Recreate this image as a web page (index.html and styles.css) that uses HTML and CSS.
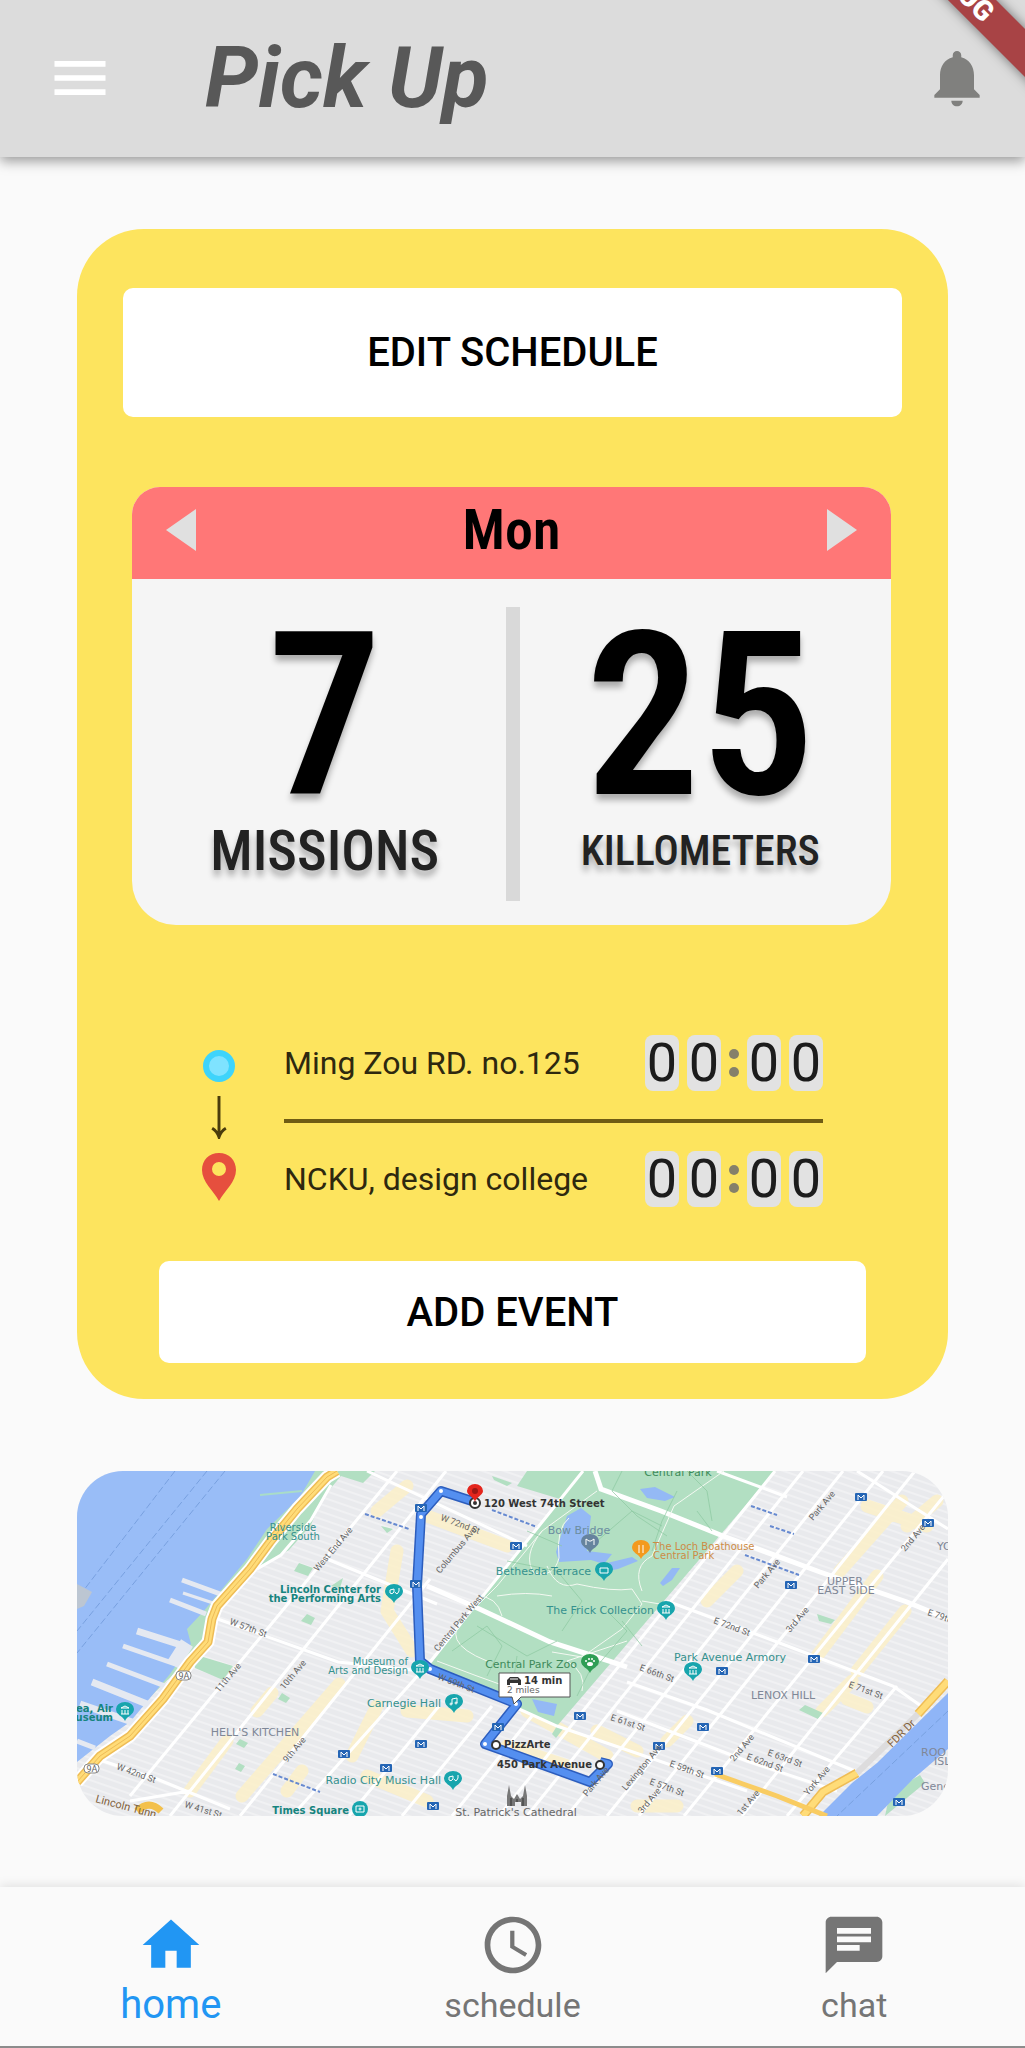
FILE: index.html
```html
<!DOCTYPE html>
<html lang="en">
<head>
<meta charset="utf-8">
<meta name="viewport" content="width=device-width, initial-scale=1">
<title>Pick Up</title>
<link rel="stylesheet" href="styles.css">
</head>
<body>
<header class="app-bar">
  <button class="icon-button" type="button" aria-label="Menu">
    <svg class="icon" viewBox="0 0 24 24"><path fill="#fff" d="M3 18h18v-2H3v2zm0-5h18v-2H3v2zm0-7v2h18V6H3z"/></svg>
  </button>
  <h1 class="app-title">Pick Up</h1>
  <button class="icon-button" type="button" aria-label="Notifications">
    <svg class="icon" viewBox="0 0 24 24"><path fill="#80807e" d="M12 22c1.100 0 2-.9 2-2h-4c0 1.100.89 2 2 2zm6-6v-5c0-3.070-1.640-5.640-4.500-6.320V4c0-.83-.67-1.500-1.500-1.500s-1.500.67-1.500 1.500v.68C7.630 5.360 6 7.920 6 11v5l-2 2v1h16v-1l-2-2z"/></svg>
  </button>
  <div class="ribbon-box"><span class="ribbon">DEBUG</span></div>
</header>

<main class="content">
  <section class="planner">
    <button class="action edit" type="button">EDIT SCHEDULE</button>

    <article class="day">
      <div class="day-head">
        <button class="arrow" type="button" aria-label="Previous day"><svg class="arrow-icon" viewBox="0 0 30 42"><path fill="#e0e0e0" d="M30 0v42L0 21z"/></svg></button>
        <h2 class="day-name">Mon</h2>
        <button class="arrow" type="button" aria-label="Next day"><svg class="arrow-icon" viewBox="0 0 30 42"><path fill="#e0e0e0" d="M0 0v42l30-21z"/></svg></button>
      </div>
      <div class="stats">
        <div class="stat"><span class="number">7</span><span class="unit">MISSIONS</span></div>
        <div class="rule"></div>
        <div class="stat"><span class="number">25</span><span class="unit small">KILLOMETERS</span></div>
      </div>
    </article>

    <div class="route">
      <div class="track">
        <svg class="dot" viewBox="0 0 32 32"><circle cx="16" cy="16" r="13" fill="#7fe3ff" stroke="#3ed4fb" stroke-width="6"/></svg>
        <svg class="down" viewBox="0 0 20 44"><path d="M10 0v41M3 33q5 3 7 9 2-6 7-9" fill="none" stroke="#4a3c0c" stroke-width="3"/></svg>
        <svg class="pin" viewBox="0 0 34 48"><path fill="#e64f3e" fill-rule="evenodd" d="M17 0C7 0 0 7 0 17c0 12 11 20 17 31 6-11 17-19 17-31C34 7 27 0 17 0zm0 9a7 7 0 1 1 0 14 7 7 0 0 1 0-14z"/></svg>
      </div>
      <div class="stops">
        <div class="stop"><span class="place">Ming Zou RD. no.125</span><span class="time"><b class="digit">0</b><b class="digit">0</b><i class="colon"></i><b class="digit">0</b><b class="digit">0</b></span></div>
        <hr class="line">
        <div class="stop"><span class="place">NCKU, design college</span><span class="time"><b class="digit">0</b><b class="digit">0</b><i class="colon"></i><b class="digit">0</b><b class="digit">0</b></span></div>
      </div>
    </div>

    <button class="action add" type="button">ADD EVENT</button>
  </section>

  <svg class="map" viewBox="0 0 871 345" role="img" aria-label="Route map">
    <defs>
      <pattern id="streets" width="60" height="7" patternUnits="userSpaceOnUse" patternTransform="rotate(19)"><path d="M0 1h60" stroke="#f8f8f9" stroke-width="1"/></pattern>
      <g id="metro"><rect x="-6" y="-4" width="12" height="8" rx="1" fill="#2465b5"/><path d="M-3 3v-5l3 3 3-3v5" fill="none" stroke="#fff" stroke-width="1"/></g>
      <path id="marker" d="M0 10C-2 5-9 4-9-2a9 7 0 0 1 18 0C9 4 2 5 0 10z"/>
    </defs>
    <rect width="871" height="345" fill="#e9eaed"/>
    <rect width="871" height="345" fill="url(#streets)"/>
    <g fill="none" stroke="#fcf0c6" stroke-width="13" stroke-linecap="round" stroke-linejoin="round" opacity=".8">
      <path d="M113 320L150 270M180 240L195 222M165 325L262 213M275 285L300 235M210 320L225 300M300 40L330 15M350 45L430 75M320 80l-10 60 25 40M290 305l60 25M330 240l60 5M450 240l80 45M430 275l60 20M520 260l40 20M763 100L825 30M790 35l60 20M740 185L800 105M780 200L828 140M745 240l30-30M770 228l20 8M630 130l30-30M590 270l20-20M560 335l40 0M830 55l30-25"/>
    </g>
    <g fill="#b2dfc2">
      <path d="M238 0h60l-12 12-22-7-20 24-10 25-22 25-30 17-34 33-12 30-26 31-38 37-21 23-53 24v-10l33-25 34-15 33-48 15-30-4-15 16 0 16-27 40-43 20-30 33-33z"/>
      <path d="M116 183l40 12-10 14-28-12z"/>
      <path d="M450 0h248L480 255l-127-61L483 28l-43-13z"/>
      <path d="M222 92l14 5-5 8-14-5zM230 143l8 4-4 7-10-4zM254 115l12-8-3 10zM205 222l8 5-4 5-8-4zM163 268l8 4-4 5-8-4zM162 292l6 3-4 6-6-3zM740 143l18 6-4 4-12-3zM728 234l18 8-5 6-19-9zM480 255l6 3-7 9-4-4zM415 5l20 7-5 3-13-6zM304 55l12 3-6 4zM813 322l30-18 5 8-40 33z"/>
    </g>
    <path d="M0 0h238l-15 26-33 32-20 30-44 53-16 17 4 15-21 30-40 48-20 14L0 291z" fill="#99bdf7"/>
    <path d="M871 222l-71 70-25 20-33 33h58l36-37 35-30z" fill="#8fb5f7"/>
    <g fill="#94b9f5"><path d="M490 45l14-8 10 8-4 35 25 3-8 10-13-4-32 2-3-10zM530 92l25-6 6 4-20 8-20 4zM563 18l15-2 20 10-10 4-18-3zM583 112l12-15 8 0-8 12-9 6zM455 228l25 5-3 12-16-4z"/></g>
    <g fill="none" stroke="#78a0df" stroke-width="1" stroke-dasharray="7 3"><path d="M98 0L0 128M130 0L0 160M148 0L0 182M871 240L760 345"/></g>
    <g fill="none" stroke="#e5e9f1">
      <path stroke-width="7" d="M60 160l44 14M15 211l60 24M3 233l55 19"/>
      <path stroke-width="5" d="M105 109l41 15M93 129l36 14M46 175l58 20M30 193l58 22M0 270l18 7"/>
      <path stroke-width="3" d="M106 122l30 10"/>
      <path stroke-width="14" d="M110 172l-14 22"/>
    </g>
    <path d="M0 113l15 8-8 14-7 3z" fill="#bcc6d2"/>
    <path d="M183 24l42-4" stroke="#a9dcc8" stroke-width="2"/>
    <g fill="none" stroke="#fff" stroke-width="3">
      <path d="M53 325L320 0M93 345L369 0M163 345L353 108M215 345L353 191L506 0M272 345l90-110M325 345l90-110M375 345l80-100M422 345L698 0M450 345L726 0M490 345L766 0M530 345L806 0M562 345L838 0M607 345L871 20M665 345L871 88M710 345L820 215"/>
      <path d="M135 146l126 45 92 10 M353 198l127 57 190 65M20 288l60 20 73 30M53 330l60-10M250 88l110 45M290 0l160 75M590 130l110 41 116 44 28 20M180 98l24-14 30-35 20-35M550 211l80 28 150 62M540 240l130 50 90 30M780 0l91 58M640 0l70 26"/>
      <path stroke-width="5" d="M350 115l46 20 77 36 53 17 24 8M518 0l6 18 60 22 62 25 97 36 87 30 41 17"/>
    </g>
    <g fill="none" stroke="#f4f9f2" stroke-width="1"><path d="M360 190l40 15 50 18M410 190q-50-20-20-45l30-30 45-55 55-40M465 60q-20 25-8 42 20 5 25-15-3-30 10-40M420 125q30-5 55 0M470 95q10 25 30 18 35 8 55 5l10 15-20 25-40 28-30-5M565 120q-10-25 10-35l22-50 50-35M565 130l30 5M400 125q20 0 25 20M505 220q5-18-15-30l60-20"/></g>
    <g fill="none" stroke="#8cc7a0" stroke-width="1" opacity=".7"><path d="M375 180l35-25 15 20-15 30M400 155l50 30 30-15M440 185l-5 35M430 90l50 10 25 30-20 30M450 60l35 15M520 70l35-30 30 15M545 0l-10 20 25 25 30 20M600 20l-15 30-10 30M610 0l20 20 5 30M515 195l-15 30M545 150l20 25M530 140l20 20-30 35M620 40l15 20M450 205l35 5"/></g>
    <g fill="none" stroke-linejoin="round">
      <path d="M260 0l-10 6-30 32-27 33-20 27-33 37-5 13-4 23-18 20-27 37-33 37-30 20-23 26" stroke="#fff" stroke-width="13"/>
      <path d="M260 0l-10 6-30 32-27 33-20 27-33 37-5 13-4 23-18 20-27 37-33 37-30 20-23 26M871 210l-30 33M780 302l-34 19-20 24" stroke="#efbd56" stroke-width="9"/>
      <path d="M260 0l-10 6-30 32-27 33-20 27-33 37-5 13-4 23-18 20-27 37-33 37-30 20-23 26M871 210l-30 33M780 302l-34 19-20 24" stroke="#ffdc78" stroke-width="6"/>
      <path d="M260 0l-10 6-30 32-27 33-20 27-33 37-5 13-4 23-18 20-27 37-33 37-30 20-23 26" stroke="#edbb57" stroke-width="1"/>
      <path d="M841 243l-61 59" stroke="#dddcdd" stroke-width="6"/>
      <path d="M638 303l28 10 34 12 50 20" stroke="#f9cc62" stroke-width="5"/>
      <path d="M60 340q12-12 24 0" stroke="#f3c04c" stroke-width="7"/>
    </g>
    <g stroke="#6689d0" stroke-width="2" stroke-dasharray="4 2"><path d="M196 303l47 18M288 43l44 15M415 39l45 17M674 35l26 9M693 55l24 8M668 84l54 20"/></g>
    <g fill="none" stroke-linejoin="round">
      <path d="M398 31l-34-11-20 23-4 72 3 75 10 8 87 35-32 40 105 38 18-18-8-2" stroke="#2c5dbd" stroke-width="10"/>
      <path d="M398 31l-34-11-20 23-4 72 3 75 10 8 87 35-32 40 105 38 18-18-8-2" stroke="#548ff0" stroke-width="7"/>
    </g>
    <g fill="#fff"><circle cx="364" cy="20" r="2"/><circle cx="344" cy="46" r="2"/><circle cx="408" cy="273" r="2"/><circle cx="439" cy="233" r="2"/><circle cx="353" cy="198" r="2"/></g>
    <g fill="#fff" stroke="#333" stroke-width="2"><circle cx="398" cy="32" r="5"/><circle cx="419" cy="274" r="4"/><circle cx="523" cy="294" r="4"/></g>
    <circle cx="398" cy="32" r="2" fill="#333"/>
    <path d="M398 31c-1-5-8-7-8-11a8 7 0 0 1 16 0c0 4-7 6-8 11z" fill="#e4251d"/><circle cx="398" cy="20" r="3" fill="#9c1814"/>

    <use href="#metro" x="344" y="37"/><use href="#metro" x="339" y="113"/><use href="#metro" x="439" y="75"/><use href="#metro" x="421" y="256"/><use href="#metro" x="344" y="273"/><use href="#metro" x="309" y="297"/><use href="#metro" x="356" y="335"/><use href="#metro" x="267" y="283"/><use href="#metro" x="503" y="245"/><use href="#metro" x="582" y="275"/><use href="#metro" x="626" y="256"/><use href="#metro" x="645" y="200"/><use href="#metro" x="737" y="188"/><use href="#metro" x="714" y="114"/><use href="#metro" x="784" y="26"/><use href="#metro" x="851" y="52"/><use href="#metro" x="640" y="300"/><use href="#metro" x="822" y="331"/>
    <g fill="#17a5ad"><use href="#marker" x="48" y="240"/><use href="#marker" x="317" y="122"/><use href="#marker" x="343" y="198"/><use href="#marker" x="377" y="232"/><use href="#marker" x="376" y="309"/><use href="#marker" x="527" y="100"/><use href="#marker" x="589" y="139"/><use href="#marker" x="616" y="200"/><circle cx="283" cy="338" r="8"/></g>
    <use href="#marker" x="513" y="72" fill="#66839e"/><use href="#marker" x="564" y="78" fill="#f39a1d"/><use href="#marker" x="513" y="192" fill="#2f9e55"/>
    <g fill="none" stroke="#fff" stroke-width="1">
      <path d="M44 237l4-2 4 2zM45 239v4M48 239v4M51 239v4M44 243h8M339 195l4-2 4 2zM340 197v4M343 197v4M346 197v4M339 201h8M585 136l4-2 4 2zM586 138v4M589 138v4M592 138v4M585 142h8M612 197l4-2 4 2zM613 199v4M616 199v4M619 199v4M612 203h8"/>
      <path d="M313 119v3q2 2 4-1v-3zM318 121q2 4 4-1v-3M372 306v3q2 2 4-1v-3zM377 308q2 4 4-1v-3M375 233v-5l5-1v5"/>
      <circle cx="374" cy="233" r="1"/><circle cx="379" cy="232" r="1"/>
      <path d="M523 97h8v5h-8zM279 335h8v6h-8zM509 74v-6l3 2h2l3-2v6M562 74v8M566 74v8"/><circle cx="283" cy="338" r="1"/>
    </g>
    <g fill="#fff"><ellipse cx="513" cy="193" rx="3" ry="2"/><circle cx="509" cy="190" r="1"/><circle cx="512" cy="188" r="1"/><circle cx="515" cy="188" r="1"/><circle cx="517" cy="190" r="1"/></g>
    <path d="M430 335v-10l2-11 2 11 3 3 3-5 3 5 3-3 2-11 2 11v10h-6v-4h-6v4z" fill="#777"/><path d="M434 335v-8M440 328v3M446 335v-8" stroke="#333"/>

    <g class="map-poi">
      <text x="364" y="236" text-anchor="end">Carnegie Hall</text>
      <text x="364" y="313" text-anchor="end">Radio City Music Hall</text>
      <text x="514" y="104" text-anchor="end">Bethesda Terrace</text>
      <text x="577" y="143" text-anchor="end">The Frick Collection</text>
      <text x="500" y="197" text-anchor="end" class="park">Central Park Zoo</text>
      <text x="653" y="190" text-anchor="middle">Park Avenue Armory</text>
      <text class="park" x="601" y="5" text-anchor="middle">Central Park</text>
      <text class="bridge" x="502" y="63" text-anchor="middle">Bow Bridge</text>
    </g>
    <g class="map-poi pair">
      <text x="216" y="60" text-anchor="middle">Riverside</text><text x="216" y="69" text-anchor="middle">Park South</text>
      <text x="331" y="198" text-anchor="end" dy="-4">Museum of</text><text x="331" y="207" text-anchor="end" dy="-4">Arts and Design</text>
      <g class="food"><text x="576" y="79">The Loch Boathouse</text><text x="576" y="88">Central Park</text></g>
      <g class="strong">
        <text x="304" y="122" text-anchor="end">Lincoln Center for</text><text x="304" y="131" text-anchor="end">the Performing Arts</text>
        <text x="272" y="343" text-anchor="end">Times Square</text>
        <text x="36" y="241" text-anchor="end">ea, Air</text><text x="36" y="250" text-anchor="end">useum</text>
      </g>
    </g>
    <g class="map-area">
      <text x="178" y="265" text-anchor="middle">HELL'S KITCHEN</text><text x="768" y="114" text-anchor="middle">UPPER</text><text x="769" y="123" text-anchor="middle">EAST SIDE</text><text x="706" y="228" text-anchor="middle">LENOX HILL</text><text x="860" y="79">YO</text><text x="844" y="285">ROO</text><text x="857" y="294">ISL</text><text x="844" y="319">Gene</text>
    </g>
    <g class="map-street">
      <text transform="translate(152 153) rotate(20)">W 57th St</text><text transform="translate(39 298) rotate(20)">W 42nd St</text><text transform="translate(107 336) rotate(17)">W 41st St</text><text transform="translate(363 49) rotate(20)">W 72nd St</text><text transform="translate(636 152) rotate(20)">E 72nd St</text><text transform="translate(771 216) rotate(20)">E 71st St</text><text transform="translate(562 199) rotate(20)">E 66th St</text><text transform="translate(533 249) rotate(18)">E 61st St</text><text transform="translate(690 284) rotate(20)">E 63rd St</text><text transform="translate(669 288) rotate(20)">E 62nd St</text><text transform="translate(592 295) rotate(20)">E 59th St</text><text transform="translate(572 313) rotate(20)">E 57th St</text><text transform="translate(850 144) rotate(18)">E 79th</text><text transform="translate(360 208) rotate(21)">W 59th St</text>
      <text transform="translate(241 101) rotate(-50)">West End Ave</text><text transform="translate(142 222) rotate(-50)">11th Ave</text><text transform="translate(207 219) rotate(-50)">10th Ave</text><text transform="translate(210 292) rotate(-50)">9th Ave</text><text transform="translate(363 103) rotate(-50)">Columbus Ave</text><text transform="translate(361 181) rotate(-50)">Central Park West</text><text transform="translate(736 50) rotate(-50)">Park Ave</text><text transform="translate(681 118) rotate(-50)">Park Ave</text><text transform="translate(713 162) rotate(-50)">3rd Ave</text><text transform="translate(828 81) rotate(-50)">2nd Ave</text><text transform="translate(657 291) rotate(-50)">2nd Ave</text><text transform="translate(731 325) rotate(-50)">York Ave</text><text transform="translate(664 345) rotate(-50)">1st Ave</text><text transform="translate(549 320) rotate(-50)">Lexington Ave</text><text transform="translate(510 326) rotate(-50)">Park Ave</text><text transform="translate(565 343) rotate(-50)">3rd Ave</text>
      <g class="road"><text transform="translate(815 277) rotate(-45)">FDR Dr</text><text transform="translate(18 331) rotate(15)">Lincoln Tunn</text></g>
    </g>
    <g fill="#fff" stroke="#888"><rect x="99" y="200" width="15" height="9" rx="4"/><rect x="7" y="293" width="15" height="9" rx="4"/></g>
    <g class="map-street"><text x="107" y="208" text-anchor="middle">9A</text><text x="15" y="301" text-anchor="middle">9A</text></g>
    <text class="map-poi church" x="439" y="345" text-anchor="middle">St. Patrick's Cathedral</text>
    <path d="M422 202h71v24h-49l-7 7-2-7h-13z" fill="#fff" stroke="#555"/>
    <path d="M430 214v-5l3-3h8l3 3v5h-3v-2h-8v2z" fill="#333"/><path d="M433 208h8" stroke="#fff"/>
    <g class="map-place"><text x="407" y="36">120 West 74th Street</text><text x="427" y="277">PizzArte</text><text x="515" y="297" text-anchor="end">450 Park Avenue</text><text x="447" y="213">14 min</text></g>
    <text class="map-distance" x="430" y="222">2 miles</text>
  </svg>
</main>

<nav class="tabs">
  <a class="tab active" href="#home"><svg class="icon" viewBox="0 0 24 24"><path fill="currentColor" d="M10 20v-6h4v6h5v-8h3L12 3 2 12h3v8z"/></svg><span class="tab-label">home</span></a>
  <a class="tab" href="#schedule"><svg class="icon" viewBox="0 0 24 24"><path fill="currentColor" d="M11.990 2C6.470 2 2 6.480 2 12s4.470 10 9.990 10C17.520 22 22 17.520 22 12S17.520 2 11.990 2zM12 20c-4.420 0-8-3.580-8-8s3.580-8 8-8 8 3.580 8 8-3.580 8-8 8zm.5-13H11v6l5.250 3.150.75-1.230-4.500-2.670z"/></svg><span class="tab-label">schedule</span></a>
  <a class="tab" href="#chat"><svg class="icon" viewBox="0 0 24 24"><path fill="currentColor" d="M20 2H4c-1.100 0-1.990.9-1.990 2L2 22l4-4h14c1.100 0 2-.9 2-2V4c0-1.100-.9-2-2-2zM6 9h12v2H6V9zm8 5H6v-2h8v2zm4-6H6V6h12v2z"/></svg><span class="tab-label">chat</span></a>
</nav>
</body>
</html>
```
FILE: styles.css
```css
* { box-sizing: border-box; }

body {
  margin: 0;
  min-height: 100vh;
  display: flex;
  flex-direction: column;
  background: #fafafa;
  font-family: Roboto, "Liberation Sans", sans-serif;
  color: #000;
}

button {
  border: 0;
  padding: 0;
  background: none;
  font: inherit;
  color: inherit;
}

svg { display: block; }

.icon { width: 68px; height: 68px; }

.app-bar {
  position: relative;
  display: flex;
  align-items: center;
  height: 157px;
  padding: 0 34px 2px 46px;
  background: #dcdcdc;
  box-shadow: 0 4px 12px rgba(0, 0, 0, .4);
}

.app-title {
  flex: 1;
  margin: 0 0 0 91px;
  font-size: 85px;
  line-height: 100px;
  font-style: italic;
  font-weight: 700;
  color: #585858;
}

.ribbon-box {
  position: absolute;
  top: 0;
  right: 0;
  width: 120px;
  height: 120px;
  overflow: hidden;
}

.ribbon {
  position: absolute;
  top: -6px;
  right: -78px;
  width: 240px;
  height: 34px;
  padding-right: 72px;
  transform: rotate(45deg);
  background: #a84345;
  box-shadow: 0 0 12px rgba(0, 0, 0, .5);
  color: #fff;
  font-size: 28px;
  line-height: 34px;
  font-weight: 900;
  text-align: center;
}

.content {
  display: flex;
  flex-direction: column;
  gap: 72px;
  padding: 72px 77px 70px;
}

.planner {
  display: flex;
  flex-direction: column;
  padding: 59px 46px 36px;
  border-radius: 67px;
  background: #fde45e;
}

.action {
  border-radius: 10px;
  background: #fff;
  font-size: 40px;
  font-weight: 500;
}

.edit { height: 129px; }
.add { height: 102px; margin: 54px 36px 0; }

.day {
  margin: 70px 11px 0 9px;
  border-radius: 28px 28px 44px 44px;
  overflow: hidden;
  background: #f5f5f5;
  font-family: "Roboto Condensed", "Liberation Sans Narrow", Roboto, sans-serif;
}

.day-head {
  display: flex;
  align-items: center;
  justify-content: space-between;
  height: 92px;
  padding: 0 34px 6px;
  background: #ff7777;
}

.arrow-icon { width: 30px; height: 42px; }

.day-name {
  margin: 0;
  font-size: 56px;
  line-height: 64px;
  font-weight: 600;
}

.stats {
  display: flex;
  height: 346px;
  padding: 28px 0 24px;
}

.rule { width: 14px; background: #d9d9d9; }

.stat {
  flex: 1;
  display: flex;
  flex-direction: column;
  align-items: center;
  text-shadow: 0 6px 6px rgba(0, 0, 0, .3);
}

.stat:first-child { padding-left: 12px; }
.stat:last-child { padding-right: 10px; }

.number {
  font-size: 228px;
  line-height: 218px;
  font-weight: 600;
}

.unit {
  font-size: 56px;
  line-height: 52px;
  font-weight: 500;
  color: #222;
}

.unit.small { font-size: 42px; }

.route {
  display: flex;
  gap: 48px;
  margin-top: 110px;
  padding: 0 79px;
}

.track {
  display: flex;
  flex-direction: column;
  align-items: center;
  gap: 14px;
  width: 34px;
  padding-top: 15px;
}

.dot { width: 32px; height: 32px; }
.down { width: 20px; height: 43px; }
.pin { width: 34px; height: 48px; }

.stops { flex: 1; }

.stop {
  display: flex;
  align-items: center;
  justify-content: space-between;
  height: 56px;
}

.place { font-size: 32px; color: #2e280f; }

.line {
  height: 4px;
  margin: 28px 0;
  border: 0;
  background: #6f5c14;
}

.time { display: flex; gap: 8px; }

.digit {
  width: 34px;
  height: 56px;
  border-radius: 8px;
  background: #e2e2e2;
  font-size: 54px;
  line-height: 56px;
  font-weight: 400;
  text-align: center;
  color: #1c1c1c;
}

.colon {
  display: flex;
  flex-direction: column;
  align-items: center;
  justify-content: center;
  gap: 8px;
  width: 10px;
}

.colon::before,
.colon::after {
  content: "";
  width: 10px;
  height: 10px;
  border-radius: 50%;
  background: #85806a;
}

.map {
  width: 100%;
  height: auto;
  border-radius: 46px;
  font-family: "DejaVu Sans", sans-serif;
}

.map-poi { font-size: 11px; fill: #35918e; }
.pair { font-size: 10px; }
.strong { font-weight: 700; fill: #16847f; }
.park { fill: #3d8a5a; }
.bridge { fill: #6b8da0; }
.food { fill: #cd8b45; }
.church { fill: #666; }
.map-area { font-size: 11px; fill: #7f8797; }
.map-street { font-family: Roboto, sans-serif; font-size: 9px; fill: #666; }
.road { font-size: 11px; fill: #80603a; }
.map-place { font-size: 10px; font-weight: 700; fill: #333; }
.map-distance { font-size: 9px; fill: #666; }

.tabs {
  display: flex;
  margin-top: auto;
  height: 161px;
  border-bottom: 2px solid #8c8c8c;
  background: #fafafa;
  box-shadow: 0 -2px 10px rgba(0, 0, 0, .1);
}

.tab {
  flex: 1;
  display: flex;
  flex-direction: column;
  align-items: center;
  padding-top: 24px;
  color: #757575;
  text-decoration: none;
  font-size: 34px;
}

.tab-label { line-height: 52px; }
.active { color: #2196f3; font-size: 40px; }
```
